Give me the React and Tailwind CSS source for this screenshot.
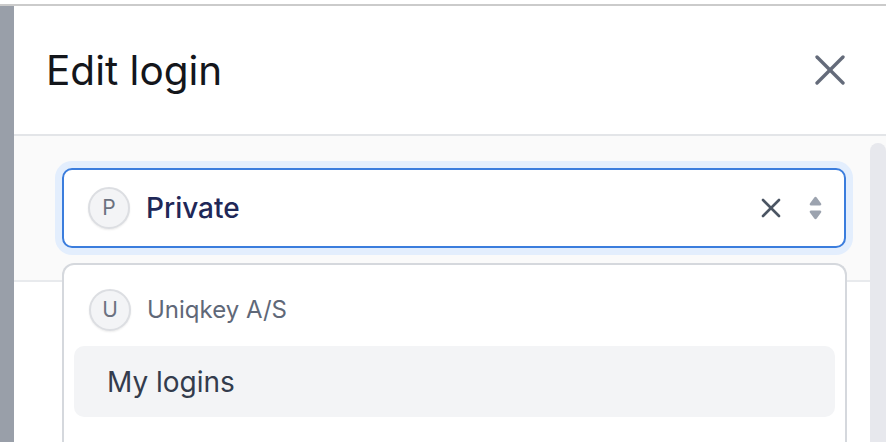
const Avatar = ({ letter }) => (
  <div className="flex h-[42px] w-[42px] shrink-0 items-center justify-center rounded-full border-2 border-[#dcdee2] bg-[#f3f4f6] text-[21px] text-[#6b7280] shadow-[0_1px_2px_rgba(0,0,0,0.08)]">
    {letter}
  </div>
)

export default function App() {
  return (
    <div className="h-[442px] w-[886px] overflow-hidden bg-white pt-[4px] font-['Inter',sans-serif]">
      <div className="flex h-full border-t-2 border-[#cbcbcb]">
        <div className="w-[14px] shrink-0 bg-[#999fa9]" />

        <div className="flex flex-1 flex-col">
          {/* Header */}
          <header className="flex h-[130px] shrink-0 items-center justify-between border-b-2 border-[#e3e5e8] pl-[32px] pr-[40px]">
            <h2 className="pt-[2px] text-[40.5px] leading-none text-[#14161b]">Edit login</h2>
            <button className="flex h-[32px] w-[32px] items-center justify-center">
              <svg width="30" height="30" viewBox="0 0 30 30" fill="none" stroke="#646b7a" strokeWidth="3.3" strokeLinecap="round">
                <path d="M2 2 28 28" />
                <path d="M28 2 2 28" />
              </svg>
            </button>
          </header>

          {/* Body */}
          <div className="relative flex-1">
            <div className="border-b-2 border-[#e8eaed] bg-[#fafafa] pb-[32px] pl-[48px] pr-[40px] pt-[32px]">
              <div className="flex h-[80px] items-center rounded-[10px] border-2 border-[#3b7ddd] bg-white pl-[24px] pr-[22px] shadow-[0_0_0_7px_#e3eefd]">
                <Avatar letter="P" />
                <span className="ml-[16px] flex-1 text-[28px] font-medium text-[#1f2858]">Private</span>
                <svg width="20" height="20" viewBox="0 0 20 20" fill="none" stroke="#4b5563" strokeWidth="2.6" strokeLinecap="round">
                  <path d="M2 2 18 18" />
                  <path d="M18 2 2 18" />
                </svg>
                <svg className="ml-[28px]" width="13" height="24" viewBox="0 0 13 24" fill="#9ca3af">
                  <path d="M5.3 1.6a1.5 1.5 0 0 1 2.4 0l4.4 5.9c.6.8 0 1.9-1 1.9H1.9c-1 0-1.6-1.1-1-1.9z" />
                  <path d="M5.3 22.4a1.5 1.5 0 0 0 2.4 0l4.4-5.9c.6-.8 0-1.9-1-1.9H1.9c-1 0-1.6 1.1-1 1.9z" />
                </svg>
              </div>
            </div>

            {/* Scrollbar thumb */}
            <div className="absolute bottom-0 right-0 top-[7px] w-[16px] rounded-t-full bg-[#e7e8ed]" />

            {/* Options menu */}
            <div className="absolute left-[48px] top-[127px] h-[200px] w-[785px] rounded-t-[12px] border-2 border-b-0 border-[#d5d8dd] bg-white px-[10px] pt-[24px]">
              <div className="flex items-center pl-[15px]">
                <Avatar letter="U" />
                <span className="ml-[16px] text-[24px] text-[#5f6878]">Uniqkey A/S</span>
              </div>
              <div className="mt-[15px] flex h-[71px] items-center rounded-[10px] bg-[#f3f4f6] pl-[33px] text-[28px] text-[#333c4d]">
                My logins
              </div>
            </div>
          </div>
        </div>
      </div>
    </div>
  )
}
